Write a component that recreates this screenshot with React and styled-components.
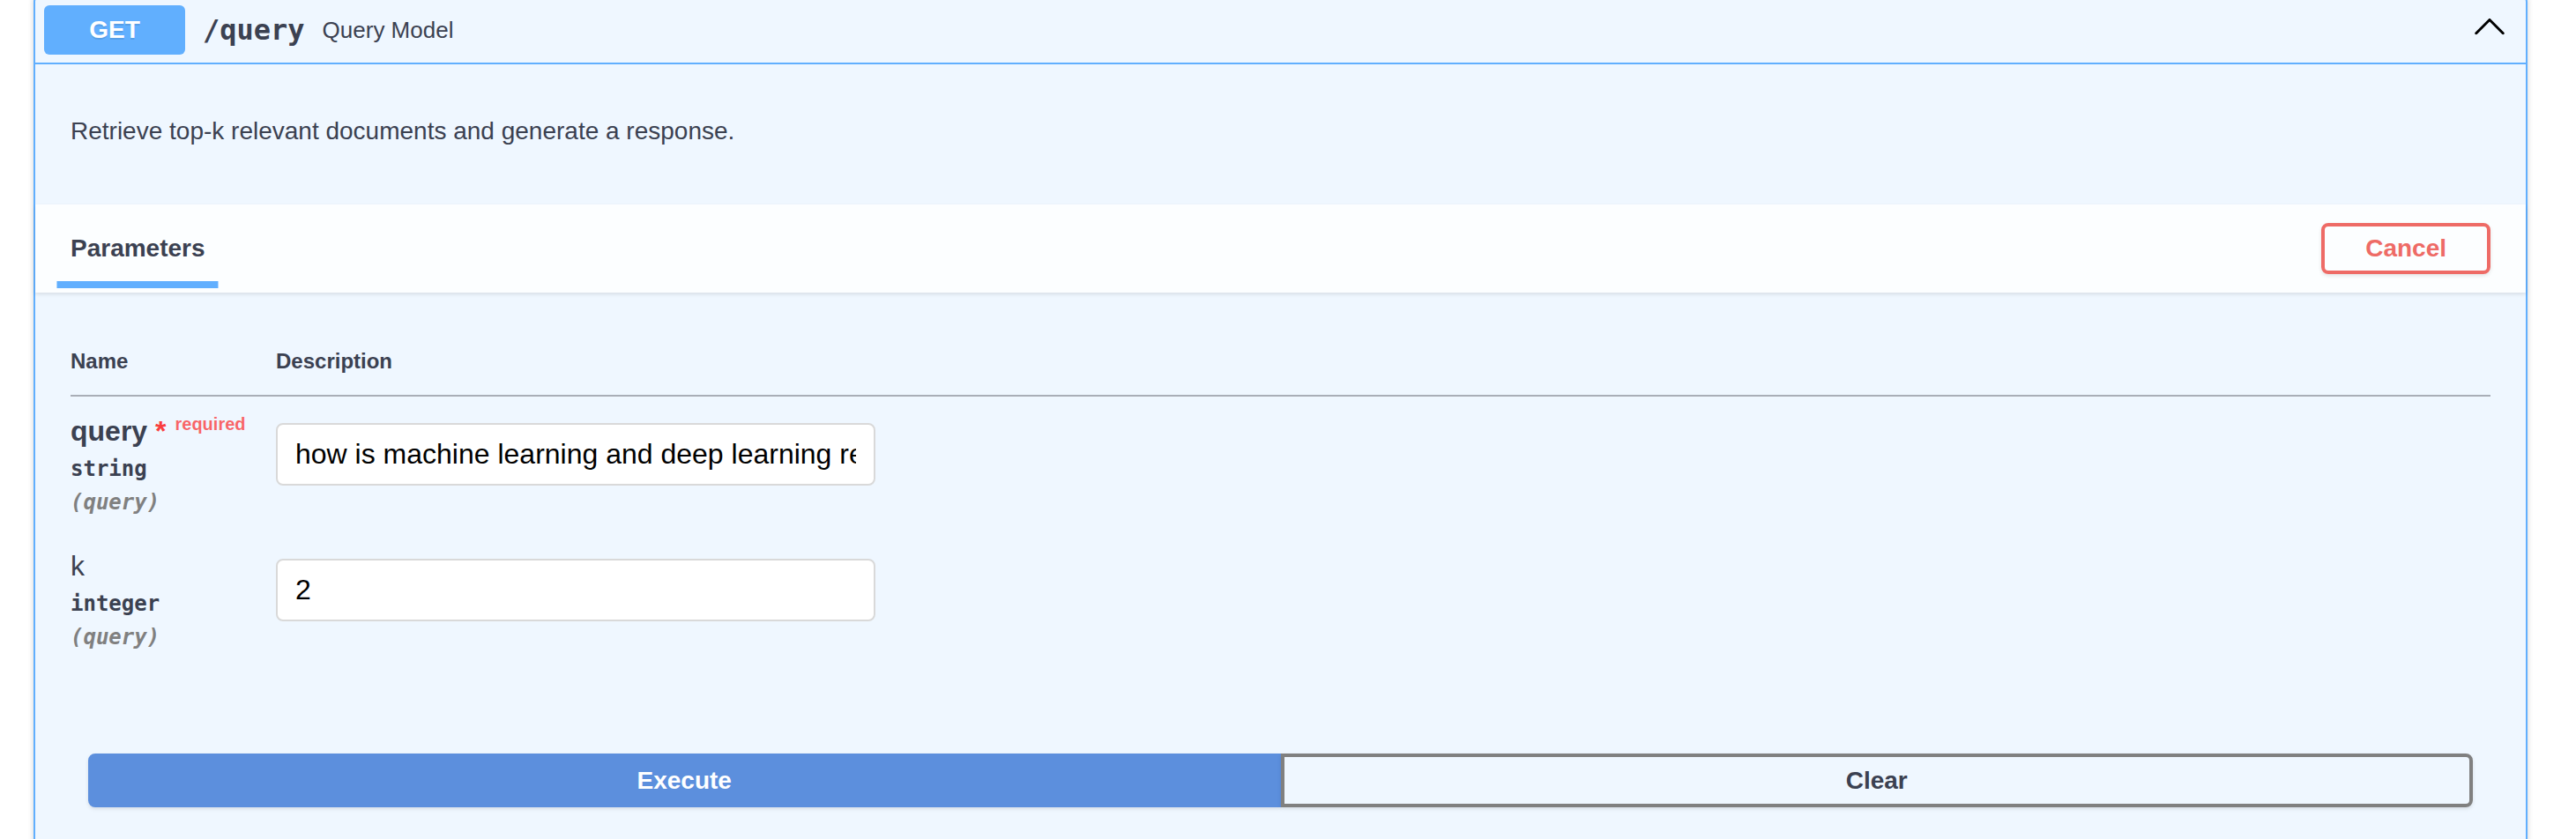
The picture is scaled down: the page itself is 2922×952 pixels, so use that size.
import React from "react";
import styled, { createGlobalStyle } from "styled-components";

const Global = createGlobalStyle`
  html, body { margin: 0; padding: 0; background: #ffffff; }
  body { font-family: "Liberation Sans", Arial, Helvetica, sans-serif; overflow: hidden; }
  * { box-sizing: border-box; }
`;

const Page = styled.div`
  padding: 0 55px 0 38px;
  margin-top: -6px;
`;

const OpBlock = styled.div`
  border: 2px solid #61affe;
  border-radius: 8px;
  background: #eff7ff;
  box-shadow: 0 0 6px rgba(0, 0, 0, 0.19);
  color: #3b4151;
`;

const Summary = styled.div`
  display: flex;
  align-items: center;
  padding: 10px 10px 9px 10px;
  border-bottom: 2px solid #61affe;
`;

const Method = styled.span`
  min-width: 160px;
  height: 56px;
  line-height: 56px;
  background: #61affe;
  border-radius: 6px;
  color: #fff;
  font-size: 28px;
  font-weight: 700;
  text-align: center;
  text-shadow: 0 2px 0 rgba(0, 0, 0, 0.1);
`;

const Path = styled.span`
  font-family: "DejaVu Sans Mono", "Liberation Mono", monospace;
  font-size: 32px;
  font-weight: 700;
  padding: 0 20px;
  color: #3b4151;
`;

const SummaryDesc = styled.span`
  flex: 1 1 auto;
  font-size: 26px;
  color: #3b4151;
`;

const ArrowButton = styled.button`
  align-self: flex-start;
  margin: 0 9px 0 0;
  padding: 0;
  border: none;
  background: transparent;
  width: 44px;
  height: 44px;
  display: flex;
  svg { display: block; }
`;

const DescWrapper = styled.div`
  padding: 30px 40px;
  margin-bottom: 11px;
  p {
    margin: 30px 0 26px;
    font-size: 28px;
    line-height: 32px;
    color: #3b4151;
  }
`;

const SectionHeader = styled.div`
  display: flex;
  align-items: center;
  justify-content: space-between;
  min-height: 100px;
  padding: 16px 40px;
  background: rgba(255, 255, 255, 0.8);
  box-shadow: 0 2px 4px rgba(0, 0, 0, 0.1);
`;

const TabTitle = styled.h4`
  margin: 0;
  font-size: 28px;
  font-weight: 700;
  color: #3b4151;
  span {
    position: relative;
  }
  span::after {
    content: "";
    position: absolute;
    left: 50%;
    bottom: -30px;
    height: 8px;
    width: 120%;
    transform: translateX(-50%);
    background: #61affe;
  }
`;

const Btn = styled.button`
  font-family: "Liberation Sans", Arial, sans-serif;
  font-size: 28px;
  font-weight: 700;
  border-radius: 8px;
  border: 4px solid ${(p) => p.$color || "#808080"};
  color: ${(p) => p.$text || "#3b4151"};
  background: ${(p) => p.$bg || "transparent"};
  box-shadow: 0 2px 4px rgba(0, 0, 0, 0.1);
  padding: 10px 46px;
  line-height: 30px;
`;

const TableContainer = styled.div`
  padding: 40px;
`;

const Table = styled.table`
  width: 100%;
  border-collapse: collapse;
  th {
    font-size: 24px;
    font-weight: 700;
    text-align: left;
    padding: 24px 0;
    border-bottom: 2px solid #a9aeb7;
    color: #3b4151;
  }
  td {
    padding: 20px 0;
    vertical-align: top;
  }
`;

const NameCol = styled.th`
  width: 233px;
`;

const ParamName = styled.div`
  font-size: 32px;
  font-weight: ${(p) => (p.$required ? 700 : 400)};
  color: #3b4151;
`;

const Star = styled.span`
  color: #f93e3e;
`;

const RequiredTag = styled.span`
  font-size: 20px;
  font-weight: 700;
  color: rgba(255, 0, 0, 0.6);
  padding: 0 10px;
  vertical-align: 12px;
`;

const ParamType = styled.div`
  font-family: "DejaVu Sans Mono", "Liberation Mono", monospace;
  font-size: 24px;
  font-weight: 700;
  padding: 10px 0;
  color: #3b4151;
`;

const ParamIn = styled.div`
  font-family: "DejaVu Sans Mono", "Liberation Mono", monospace;
  font-size: 24px;
  font-weight: 700;
  font-style: italic;
  color: #808080;
`;

const TextInput = styled.input`
  display: block;
  width: 680px;
  margin: 10px 0;
  padding: 16px 20px;
  border: 2px solid #d9d9d9;
  border-radius: 8px;
  background: #fff;
  color: #000;
  font-family: "Liberation Sans", Arial, sans-serif;
  font-size: 32px;
  line-height: 35px;
  height: 71px;
  outline: none;
`;

const BtnGroup = styled.div`
  display: flex;
  padding: 58px 60px 60px;
`;

const GroupBtn = styled(Btn)`
  flex: 1 1 0;
  line-height: 33px;
  border-radius: ${(p) => (p.$first ? "8px 0 0 8px" : "0 8px 8px 0")};
`;

const ArrowUp = () => (
  <svg width="44" height="44" viewBox="0 0 20 20" aria-hidden="true">
    <path
      fill="#000"
      d="M17.418 14.908c-.271.271-.709.271-.979 0L10 8.463l-6.438 6.445c-.271.271-.709.271-.979 0s-.271-.709 0-.979l6.928-6.936c.271-.271.709-.271.979 0l6.928 6.936c.272.271.272.709 0 .979z"
    />
  </svg>
);

const params = [
  {
    name: "query",
    required: true,
    type: "string",
    value: "how is machine learning and deep learning related to artificial intelligence",
  },
  { name: "k", required: false, type: "integer", value: "2" },
];

export default function App() {
  return (
    <>
      <Global />
      <Page>
        <OpBlock>
          <Summary>
            <Method>GET</Method>
            <Path>/query</Path>
            <SummaryDesc>Query Model</SummaryDesc>
            <ArrowButton aria-label="collapse">
              <ArrowUp />
            </ArrowButton>
          </Summary>
          <DescWrapper>
            <p>Retrieve top-k relevant documents and generate a response.</p>
          </DescWrapper>
          <SectionHeader>
            <TabTitle>
              <span>Parameters</span>
            </TabTitle>
            <Btn $color="#ee6b66" $text="#ee6b66">
              Cancel
            </Btn>
          </SectionHeader>
          <TableContainer>
            <Table>
              <thead>
                <tr>
                  <NameCol>Name</NameCol>
                  <th>Description</th>
                </tr>
              </thead>
              <tbody>
                {params.map((p) => (
                  <tr key={p.name}>
                    <td>
                      <ParamName $required={p.required}>
                        {p.name}
                        {p.required && (
                          <>
                            <Star>&nbsp;*</Star>
                            <RequiredTag>required</RequiredTag>
                          </>
                        )}
                      </ParamName>
                      <ParamType>{p.type}</ParamType>
                      <ParamIn>(query)</ParamIn>
                    </td>
                    <td>
                      <TextInput type="text" defaultValue={p.value} />
                    </td>
                  </tr>
                ))}
              </tbody>
            </Table>
          </TableContainer>
          <BtnGroup>
            <GroupBtn $first $color="#5c8fdd" $bg="#5c8fdd" $text="#fff">
              Execute
            </GroupBtn>
            <GroupBtn $color="#808080">Clear</GroupBtn>
          </BtnGroup>
        </OpBlock>
      </Page>
    </>
  );
}
